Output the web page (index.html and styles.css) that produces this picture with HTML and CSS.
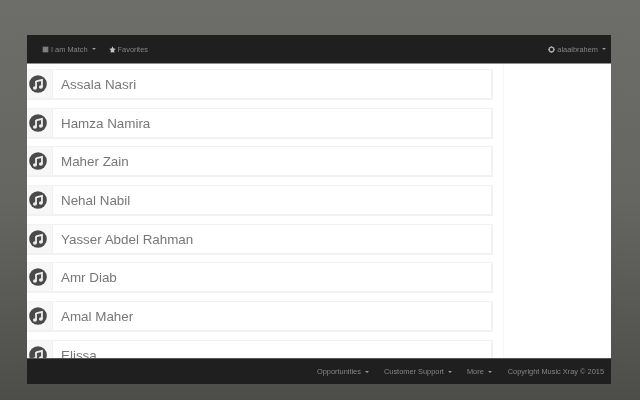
FILE: index.html
```html
<!DOCTYPE html>
<html lang="en">
<head>
    <meta charset="UTF-8">
    <meta name="viewport" content="width=device-width, initial-scale=1.0">
    <title>Music Xray</title>
    <link rel="stylesheet" href="styles.css">
</head>
<body>
    <div class="app">
        <nav class="topbar">
            <div class="topbar-left">
                <a class="nav-link">
                    <svg class="nav-icon" viewBox="0 0 10 10"><path d="M1 1h8v8H1z" fill="#8a8a88"/><path d="M3 1v8M7 1v8" stroke="#555" stroke-width="0.8"/></svg>
                    I am Match <span class="caret"></span>
                </a>
                <a class="nav-link">
                    <svg class="nav-icon" viewBox="0 0 10 10"><path d="M5 .5l1.4 3 3.3.4-2.4 2.2.6 3.3L5 8.8 2.1 9.4l.6-3.3L.3 3.9l3.3-.4z" fill="#c4c4c2"/></svg>
                    Favorites
                </a>
            </div>
            <a class="nav-link">
                <svg class="nav-icon" viewBox="0 0 10 10"><circle cx="5" cy="5" r="3.4" fill="none" stroke="#a8a8a6" stroke-width="2"/><path d="M5 0v2M5 8v2M0 5h2M8 5h2" stroke="#a8a8a6" stroke-width="1.2"/></svg>
                alaaibrahem <span class="caret"></span>
            </a>
        </nav>

        <main class="content">
            <div class="artists">
                <div class="artist"><span class="artist-icon"><svg viewBox="0 0 20 20"><use href="#note"/></svg></span><span class="artist-name">Assala Nasri</span></div>
                <div class="artist"><span class="artist-icon"><svg viewBox="0 0 20 20"><use href="#note"/></svg></span><span class="artist-name">Hamza Namira</span></div>
                <div class="artist"><span class="artist-icon"><svg viewBox="0 0 20 20"><use href="#note"/></svg></span><span class="artist-name">Maher Zain</span></div>
                <div class="artist"><span class="artist-icon"><svg viewBox="0 0 20 20"><use href="#note"/></svg></span><span class="artist-name">Nehal Nabil</span></div>
                <div class="artist"><span class="artist-icon"><svg viewBox="0 0 20 20"><use href="#note"/></svg></span><span class="artist-name">Yasser Abdel Rahman</span></div>
                <div class="artist"><span class="artist-icon"><svg viewBox="0 0 20 20"><use href="#note"/></svg></span><span class="artist-name">Amr Diab</span></div>
                <div class="artist"><span class="artist-icon"><svg viewBox="0 0 20 20"><use href="#note"/></svg></span><span class="artist-name">Amal Maher</span></div>
                <div class="artist"><span class="artist-icon"><svg viewBox="0 0 20 20"><use href="#note"/></svg></span><span class="artist-name">Elissa</span></div>
            </div>
            <aside class="sidebar"></aside>
        </main>

        <footer class="bottombar">
            <a class="nav-link">Opportunities <span class="caret"></span></a>
            <a class="nav-link">Customer Support <span class="caret"></span></a>
            <a class="nav-link">More <span class="caret"></span></a>
            <span class="copyright">Copyright Music Xray &copy; 2015</span>
        </footer>
    </div>

    <svg class="defs" width="0" height="0">
        <symbol id="note" viewBox="0 0 20 20">
            <circle cx="10" cy="10" r="9.8" fill="#4a4a4a"/>
            <path d="M7.8 7L14.4 5.4v8" fill="none" stroke="#eeeeee" stroke-width="2"/>
            <path d="M7.8 6.6v7.8" fill="none" stroke="#eeeeee" stroke-width="2"/>
            <ellipse cx="6.6" cy="14.4" rx="2.2" ry="1.9" fill="#eeeeee"/>
            <ellipse cx="13.2" cy="13.4" rx="2.2" ry="1.9" fill="#eeeeee"/>
        </symbol>
    </svg>
</body>
</html>
```

FILE: styles.css
```css
html, body {
    height: 100%;
}
body {
    font-family: 'Liberation Sans', Arial, sans-serif;
    margin: 0;
    padding: 35px 29px 16px 27px;
    box-sizing: border-box;
    background:
        repeating-linear-gradient(90deg, rgba(255,255,255,0.008) 0 1px, transparent 1px 3px),
        repeating-linear-gradient(0deg, rgba(0,0,0,0.012) 0 1px, transparent 1px 2px),
        linear-gradient(180deg, #6d6d69 0%, #656561 50%, #4d4d4a 100%);
    overflow: hidden;
}
.app {
    height: 100%;
    display: flex;
    flex-direction: column;
    background: #fff;
}
.topbar {
    flex: none;
    height: 28px;
    display: flex;
    align-items: center;
    justify-content: space-between;
    padding: 0 5px 0 15px;
    background: #1f1f1f;
    border-bottom: 1px solid #8d8d8d;
}
.topbar-left {
    display: flex;
    gap: 13px;
}
.nav-link {
    display: flex;
    align-items: center;
    gap: 2px;
    font-size: 7.4px;
    color: #868684;
    filter: blur(0.4px);
}
.nav-icon {
    width: 7px;
    height: 7px;
}
.caret {
    margin-left: 2px;
    border-top: 2px solid #9a9a98;
    border-left: 2px solid transparent;
    border-right: 2px solid transparent;
}
.content {
    flex: 1;
    min-height: 0;
    display: flex;
    overflow: hidden;
}
.artists {
    width: 466px;
    padding-top: 5px;
    display: flex;
    flex-direction: column;
    gap: 7.7px;
    overflow: hidden;
}
.artist {
    flex: none;
    height: 31px;
    box-sizing: border-box;
    display: flex;
    align-items: center;
    border: solid #f2f2f2;
    border-width: 1px 2px 2px 0;
    background: #fff;
}
.artist-icon {
    flex: 0 0 26px;
    box-sizing: border-box;
    height: 100%;
    padding-left: 2px;
    display: flex;
    align-items: center;
    background: #f7f7f7;
    border-right: 1px solid #f0f0f0;
}
.artist-icon svg {
    width: 18px;
    height: 18px;
}
.artist-name {
    margin-left: 8px;
    padding-top: 1px;
    font-size: 13.4px;
    color: #777777;
    filter: blur(0.3px);
}
.sidebar {
    flex: 1;
    margin-left: 10px;
    border-left: 1px solid #f7f7f7;
}
.bottombar {
    flex: 0 0 26px;
    display: flex;
    align-items: center;
    justify-content: flex-end;
    gap: 15px;
    padding-right: 7px;
    background: #1f1f1f;
    border-top: 1px solid #555;
    box-sizing: border-box;
}
.copyright {
    font-size: 7.4px;
    color: #868684;
    margin-left: 1px;
    filter: blur(0.4px);
}
.defs {
    position: absolute;
}
```
